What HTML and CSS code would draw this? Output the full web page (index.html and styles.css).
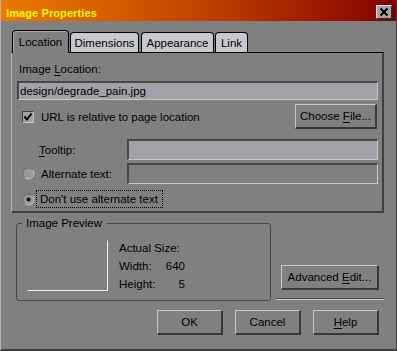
FILE: index.html
```html
<!DOCTYPE html>
<html>
<head>
<meta charset="utf-8">
<title>Image Properties</title>
<link rel="stylesheet" href="styles.css">
</head>
<body>
<div class="window">
  <div class="titlebar">
    <span class="title">Image Properties</span>
    <span class="close"><svg width="14" height="12" viewBox="0 0 14 12"><path d="M3.5 2.5 L10.5 9.5 M10.5 2.5 L3.5 9.5" stroke="#000" stroke-width="2" fill="none"/></svg></span>
  </div>
  <div class="tabs">
    <div class="tab active tab-loc">Location</div>
    <div class="tab tab-dim">Dimensions</div>
    <div class="tab tab-app">Appearance</div>
    <div class="tab tab-link">Link</div>
  </div>
  <div class="panel">
    <div class="label-loc">Image <u>L</u>ocation:</div>
    <div class="input input-loc">design/degrade_pain.jpg</div>
    <div class="row row-url">
      <span class="checkbox"><svg width="10" height="10" viewBox="0 0 10 10"><path d="M1.5 4.5 L4 7.5 L8.5 1.5" stroke="#000" stroke-width="2" fill="none"/></svg></span>
      <span class="cb-label">URL is relative to page location</span>
      <span class="btn btn-choose"><span>Choose <u>F</u>ile...</span></span>
    </div>
    <div class="row row-tip">
      <span class="lbl lbl-tip"><u>T</u>ooltip:</span>
      <span class="input input-field"></span>
    </div>
    <div class="row row-alt">
      <span class="radio"><svg width="13" height="13" viewBox="0 0 13 13"><circle cx="6.5" cy="6.5" r="5.5" fill="#9a9a9a" stroke="#c8c8c8" stroke-width="1"/><path d="M2.6 10.4 A5.5 5.5 0 0 1 10.4 2.6" stroke="#505050" stroke-width="1" fill="none"/></svg></span>
      <span class="lbl lbl-alt">Alternate text:</span>
      <span class="input input-field disabled"></span>
    </div>
    <div class="row row-noalt">
      <span class="radio"><svg width="13" height="13" viewBox="0 0 13 13"><circle cx="6.5" cy="6.5" r="5.5" fill="#9a9a9a" stroke="#c8c8c8" stroke-width="1"/><path d="M2.6 10.4 A5.5 5.5 0 0 1 10.4 2.6" stroke="#505050" stroke-width="1" fill="none"/><circle cx="6.5" cy="6.5" r="2" fill="#000"/></svg></span>
      <span class="focus"><span>Don't use alternate text</span></span>
    </div>
  </div>
  <div class="lower">
    <fieldset class="group">
      <legend>Image Preview</legend>
      <div class="group-body">
        <div class="preview-frame"></div>
        <div class="info">
          <div class="info-title">Actual Size:</div>
          <div>Width:</div><div class="val">640</div>
          <div>Height:</div><div class="val">5</div>
        </div>
      </div>
    </fieldset>
    <div class="side">
      <div class="btn btn-adv"><span>Advanced <u>E</u>dit...</span></div>
      <div class="sep"></div>
    </div>
  </div>
  <div class="buttons">
    <div class="btn btn-bottom"><span>OK</span></div>
    <div class="btn btn-bottom"><span>Cancel</span></div>
    <div class="btn btn-bottom"><span><u>H</u>elp</span></div>
  </div>
</div>
</body>
</html>
```
FILE: styles.css
```css
* { box-sizing: border-box; }
html, body { margin: 0; padding: 0; background: #808080; }
body {
  font-family: "Liberation Sans", Arial, sans-serif;
  font-size: 11.5px;
  line-height: 14px;
  color: #000;
}
u { text-decoration: underline; text-underline-offset: 2px; }

.window {
  width: 397px;
  height: 351px;
  background: #808080;
  border-left: 1px solid #b4b4b4;
  border-right: 1px solid #404040;
  border-bottom: 2px solid #404040;
  overflow: hidden;
}

.titlebar {
  height: 21px;
  display: flex;
  align-items: flex-start;
  background: linear-gradient(90deg, #ea7800 0%, #d86000 25%, #c04400 50%, #a42000 75%, #800000 100%);
  padding-left: 5px;
}
.title {
  margin-top: 6px;
  font-weight: bold;
  font-size: 11px;
  color: #ffff00;
  letter-spacing: 0.1px;
}
.close {
  margin-left: auto;
  margin-right: 4px;
  margin-top: 5px;
  width: 16px;
  height: 14px;
  background: #a4a4a4;
  border-top: 1px solid #e0e0e0;
  border-left: 1px solid #e0e0e0;
  border-right: 1px solid #303030;
  border-bottom: 1px solid #303030;
  display: flex;
  align-items: center;
  justify-content: center;
}
.close svg { display: block; }

.tabs {
  margin-top: 9px;
  height: 22px;
  display: flex;
  align-items: flex-end;
  padding-left: 11px;
}
.tab {
  height: 20px;
  border: 1px solid #000;
  border-bottom: none;
  border-radius: 4px 4px 0 0;
  background: #c8c8d0;
  display: flex;
  align-items: center;
  justify-content: center;
  margin-right: 1px;
}
.tab.active {
  height: 23px;
  margin-bottom: -1px;
  background: #808080;
  position: relative;
  z-index: 1;
  box-shadow: inset 1px 1px 0 #a8a8a8;
}
.tab-loc { width: 57px; }
.tab-dim { width: 69px; margin-right: 2px; }
.tab-app { width: 73px; }
.tab-link { width: 33px; }

.panel {
  margin-left: 10px;
  width: 373px;
  height: 161px;
  border-top: 1px solid #000;
  border-left: 1px solid #b4b4b4;
  border-right: 2px solid #404040;
  border-bottom: 2px solid #404040;
}
.label-loc {
  margin-top: 9px;
  padding-left: 7px;
}
.input {
  display: block;
  background: #a2a0a8;
  border-top: 2px solid #484848;
  border-left: 2px solid #484848;
  border-right: 1px solid #c8c8c8;
  border-bottom: 1px solid #c8c8c8;
  white-space: nowrap;
}
.input.disabled { background: #808080; }
.input-loc {
  margin-top: 5px;
  margin-left: 5px;
  width: 361px;
  height: 19px;
  padding: 1px 0 0 1px;
}
.row {
  display: flex;
  align-items: center;
  padding-left: 10px;
}
.row-url { margin-top: 4px; height: 25px; }
.checkbox {
  width: 12px;
  height: 12px;
  background: #a2a0a8;
  border-top: 1px solid #404040;
  border-left: 1px solid #404040;
  border-right: 1px solid #c8c8c8;
  border-bottom: 1px solid #c8c8c8;
  display: flex;
  align-items: center;
  justify-content: center;
}
.checkbox svg { display: block; }
.cb-label { margin-left: 7px; }
.btn {
  display: flex;
  align-items: center;
  justify-content: center;
  background: #808080;
  border-top: 1px solid #c8c8c8;
  border-left: 1px solid #c8c8c8;
  border-right: 2px solid #383838;
  border-bottom: 2px solid #383838;
  white-space: nowrap;
}
.btn-choose {
  margin-left: auto;
  margin-right: 5px;
  width: 82px;
  height: 25px;
}
.row-tip { margin-top: 10px; height: 21px; }
.row-alt { margin-top: 3px; height: 21px; }
.lbl-tip { margin-left: 17px; }
.lbl-alt { margin-left: 6px; }
.input-field {
  margin-left: auto;
  margin-right: 4px;
  width: 251px;
  height: 21px;
}
.radio { width: 13px; height: 13px; display: block; }
.radio svg { display: block; }
.row-noalt { margin-top: 6px; height: 18px; }
.focus {
  margin-left: 1px;
  height: 18px;
  width: 127px;
  border: 1px dotted #000;
  display: flex;
  align-items: center;
  padding-left: 3px;
  white-space: nowrap;
}

.lower {
  display: flex;
  margin-top: 3px;
  height: 85px;
}
.group {
  margin: 0 0 0 15px;
  padding: 0;
  width: 255px;
  height: 85px;
  min-inline-size: 0;
  border: 1px solid #484848;
  border-radius: 3px;
}
.group legend {
  margin-left: 5px;
  padding: 0 5px 0 4px;
  line-height: 14px;
}
.group-body {
  display: flex;
  align-items: flex-start;
  padding-left: 10px;
}
.preview-frame {
  margin-top: 10px;
  width: 81px;
  height: 51px;
  border-top: 1px solid #808080;
  border-left: 1px solid #808080;
  border-right: 1px solid #f0f0f0;
  border-bottom: 1px solid #f0f0f0;
}
.info {
  margin-left: 11px;
  margin-top: 9px;
  width: 66px;
  display: grid;
  grid-template-columns: 1fr auto;
  line-height: 18px;
}
.info-title { grid-column: 1 / 3; }
.val { text-align: right; }

.side {
  margin-left: 5px;
  width: 108px;
  display: flex;
  flex-direction: column;
}
.btn-adv {
  margin-top: 49px;
  margin-left: 5px;
  width: 98px;
  height: 25px;
}
.sep {
  margin-top: 8px;
  height: 2px;
  border-top: 1px solid #505050;
  border-bottom: 1px solid #c8c8c8;
}

.buttons {
  display: flex;
  margin-top: 9px;
  padding-left: 156px;
  gap: 12px;
}
.btn-bottom {
  width: 66px;
  height: 25px;
}
```
